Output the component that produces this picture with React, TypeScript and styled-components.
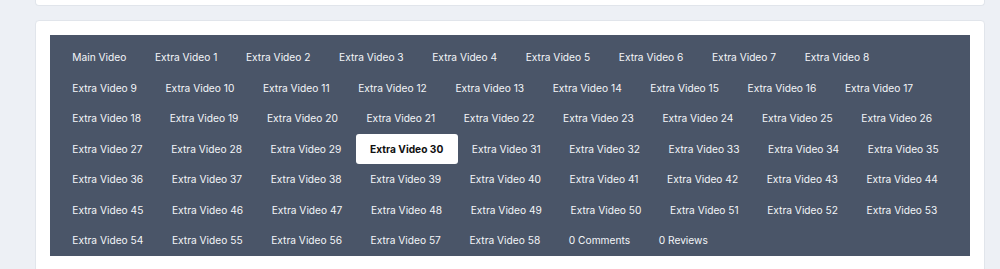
import React from 'react';
import styled, { createGlobalStyle } from 'styled-components';

const GlobalStyle = createGlobalStyle`
  html, body {
    margin: 0;
    padding: 0;
    background: #edf0f5;
    font-family: Inter, "Noto Sans", sans-serif;
  }
`;

const Page = styled.div`
  padding: 0 15px 0 35px;
  height: 269px;
  overflow: hidden;
`;

const TopCard = styled.div`
  height: 5px;
  background: #fff;
  border: 1px solid #e1e5eb;
  border-top: none;
  border-radius: 0 0 4px 4px;
`;

const Card = styled.div`
  margin-top: 14px;
  background: #fff;
  border: 1px solid #e1e5eb;
  border-radius: 4px;
  padding: 14px 14px 40px;
`;

const TabBar = styled.div`
  display: flex;
  flex-wrap: wrap;
  background: #4a5568;
  padding: 7px 8px 0;
`;

const Tab = styled.div<{ $active?: boolean }>`
  padding: 0 14.3px;
  height: 30.5px;
  line-height: 30.5px;
  font-size: 10.2px;
  white-space: nowrap;
  border-radius: 3px;
  cursor: pointer;
  color: ${(p) => (p.$active ? '#111' : '#f4f6f9')};
  background: ${(p) => (p.$active ? '#fff' : 'transparent')};
  font-weight: ${(p) => (p.$active ? 700 : 400)};
`;

const tabs = [
  'Main Video',
  ...Array.from({ length: 58 }, (_, i) => `Extra Video ${i + 1}`),
  '0 Comments',
  '0 Reviews',
];

export default function App() {
  return (
    <>
      <GlobalStyle />
      <Page>
        <TopCard />
        <Card>
          <TabBar>
            {tabs.map((t) => (
              <Tab key={t} $active={t === 'Extra Video 30'}>
                {t}
              </Tab>
            ))}
          </TabBar>
        </Card>
      </Page>
    </>
  );
}
